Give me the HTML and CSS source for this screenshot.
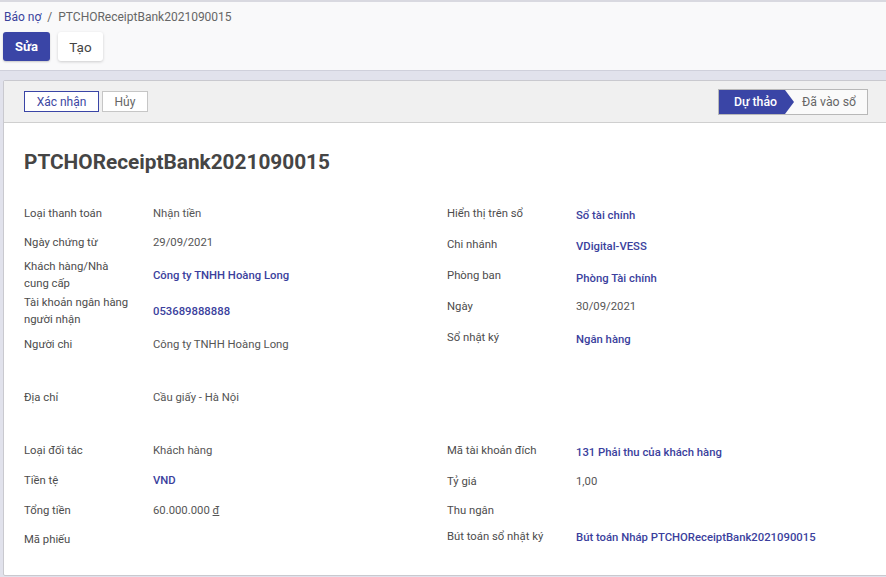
FILE: index.html
```html
<!DOCTYPE html>
<html lang="vi">
<head>
<meta charset="utf-8">
<title>PTCHOReceiptBank2021090015</title>
<link rel="stylesheet" href="styles.css">
</head>
<body>
<div class="control-panel">
  <div class="breadcrumb">
    <a class="crumb-link">Báo nợ</a>
    <span class="crumb-sep">/</span>
    <span class="crumb-active">PTCHOReceiptBank2021090015</span>
  </div>
  <div class="cp-buttons">
    <button class="btn btn-primary">Sửa</button>
    <button class="btn btn-secondary">Tạo</button>
  </div>
</div>
<div class="content">
  <div class="sheet">
    <div class="statusbar">
      <div class="status-actions">
        <button class="sbtn sbtn-primary">Xác nhận</button>
        <button class="sbtn sbtn-cancel">Hủy</button>
      </div>
      <div class="stages">
        <span class="stage stage-active">Dự thảo</span>
        <span class="stage">Đã vào sổ</span>
      </div>
    </div>
    <div class="sheet-body">
      <h1 class="title">PTCHOReceiptBank2021090015</h1>
      <div class="groups groups-first">
        <div class="group">
          <div class="row h29"><span class="lbl">Loại thanh toán</span><span class="val">Nhận tiền</span></div>
          <div class="row h29"><span class="lbl">Ngày chứng từ</span><span class="val">29/09/2021</span></div>
          <div class="row h36"><span class="lbl">Khách hàng/Nhà<br>cung cấp</span><span class="val link">Công ty TNHH Hoàng Long</span></div>
          <div class="row h36"><span class="lbl">Tài khoản ngân hàng<br>người nhận</span><span class="val link">053689888888</span></div>
          <div class="row h31"><span class="lbl">Người chi</span><span class="val">Công ty TNHH Hoàng Long</span></div>
          <div class="row h31 gap-above"><span class="lbl">Địa chỉ</span><span class="val">Cầu giấy - Hà Nội</span></div>
        </div>
        <div class="group group-right">
          <div class="row h31"><span class="lbl">Hiển thị trên sổ</span><span class="val link low">Sổ tài chính</span></div>
          <div class="row h31"><span class="lbl">Chi nhánh</span><span class="val link low">VDigital-VESS</span></div>
          <div class="row h31"><span class="lbl">Phòng ban</span><span class="val link lower">Phòng Tài chính</span></div>
          <div class="row h31"><span class="lbl">Ngày</span><span class="val">30/09/2021</span></div>
          <div class="row h31"><span class="lbl">Sổ nhật ký</span><span class="val link low">Ngân hàng</span></div>
        </div>
      </div>
      <div class="groups groups-second">
        <div class="group">
          <div class="row h30"><span class="lbl">Loại đối tác</span><span class="val">Khách hàng</span></div>
          <div class="row h30"><span class="lbl">Tiền tệ</span><span class="val link">VND</span></div>
          <div class="row h30"><span class="lbl">Tổng tiền</span><span class="val">60.000.000 <u>đ</u></span></div>
          <div class="row h28"><span class="lbl">Mã phiếu</span><span class="val"></span></div>
        </div>
        <div class="group">
          <div class="row h31"><span class="lbl">Mã tài khoản đích</span><span class="val link low">131 Phải thu của khách hàng</span></div>
          <div class="row h30"><span class="lbl">Tỷ giá</span><span class="val">1,00</span></div>
          <div class="row h28"><span class="lbl">Thu ngân</span><span class="val"></span></div>
          <div class="row h24"><span class="lbl">Bút toán sổ nhật ký</span><span class="val link low">Bút toán Nháp PTCHOReceiptBank2021090015</span></div>
        </div>
      </div>
    </div>
  </div>
</div>
</body>
</html>
```
FILE: styles.css
```css
html, body {
  margin: 0;
  padding: 0;
  overflow: hidden;
  height: 100%;
}
body {
  font-family: Roboto, "Noto Sans", "Liberation Sans", sans-serif;
  font-size: 11.3px;
  color: #4c4c4c;
  background: #e1e2ec;
}
.control-panel {
  background: #f9f9fa;
  border-top: 2px solid #d9d9e0;
  border-bottom: 1px solid #cfd0db;
  padding: 0 0 0 4px;
  box-sizing: border-box;
  height: 71px;
}
.breadcrumb {
  height: 28px;
  display: flex;
  align-items: center;
  gap: 6px;
  font-size: 12px;
  padding-top: 1px;
  box-sizing: border-box;
}
.crumb-link {
  color: #3a439c;
}
.crumb-sep,
.crumb-active {
  color: #666;
}
.cp-buttons {
  display: flex;
  gap: 8px;
  margin-top: 2px;
  margin-left: -1px;
}
.btn {
  font-family: inherit;
  font-size: 13px;
  height: 29px;
  border-radius: 3px;
  border: none;
  padding: 0;
  cursor: pointer;
}
.btn-primary {
  background: #3a45a6;
  color: #fff;
  font-weight: 700;
  width: 47px;
  box-shadow: 0 1px 2px rgba(0,0,0,0.2);
}
.btn-secondary {
  background: #fff;
  color: #444;
  width: 45px;
  font-size: 13.5px;
  box-shadow: 0 1px 3px rgba(0,0,0,0.18);
}
.content {
  padding: 9px 0 0 3px;
}
.sheet {
  margin-right: -4px;
  background: #fff;
  border: 1px solid #c9c9cf;
  border-radius: 2px;
  height: 496px;
  box-sizing: border-box;
}
.statusbar {
  background: #f0f0f0;
  border-bottom: 1px solid #cfcfcf;
  height: 42px;
  box-sizing: border-box;
  display: flex;
  align-items: center;
  justify-content: space-between;
  padding: 0 21px 0 20px;
}
.status-actions {
  display: flex;
  gap: 3px;
}
.sbtn {
  font-family: inherit;
  font-size: 12px;
  height: 21px;
  background: #fff;
  border: 1px solid #c6c6c6;
  color: #666;
  padding: 0;
  border-radius: 0;
  white-space: nowrap;
}
.sbtn-primary {
  border-color: #3a45a6;
  color: #3d48a3;
  width: 75px;
}
.sbtn-cancel {
  width: 46px;
}
.stages {
  display: flex;
  border: 1px solid #b8b8b8;
  height: 26px;
  box-sizing: border-box;
  background: #fafafa;
}
.stage {
  display: flex;
  align-items: center;
  font-size: 12.3px;
  color: #666;
  padding: 0 11px 0 17px;
}
.stage-active {
  position: relative;
  background: #3a45a6;
  color: #fff;
  font-weight: 500;
  padding: 0 8px 0 15px;
}
.stage-active::after {
  content: "";
  position: absolute;
  right: -9px;
  top: 0;
  border-top: 12px solid transparent;
  border-bottom: 12px solid transparent;
  border-left: 9px solid #3a45a6;
}
.sheet-body {
  padding: 27px 0 0 20px;
}
.title {
  margin: 0;
  font-size: 20.8px;
  font-weight: 700;
  color: #454545;
  line-height: 24px;
  height: 49px;
}
.groups {
  display: grid;
  grid-template-columns: 423px 1fr;
}
.groups-second {
  margin-top: 22px;
}
.group-right {
  margin-top: -1px;
}
.row {
  display: grid;
  grid-template-columns: 129px 1fr;
  align-items: center;
  line-height: 17px;
}
.h24 { height: 24px; }
.h28 { height: 28px; }
.h29 { height: 29px; }
.h30 { height: 30px; }
.h31 { height: 31px; }
.h36 { height: 36px; }
.gap-above { margin-top: 22px; }
.lbl {
  color: #4c4c4c;
}
.val {
  color: #555;
}
.val.link {
  color: #3b3f9d;
  font-weight: 500;
}
.val.low { padding-top: 3px; }
.val.lower { padding-top: 5px; }
```
